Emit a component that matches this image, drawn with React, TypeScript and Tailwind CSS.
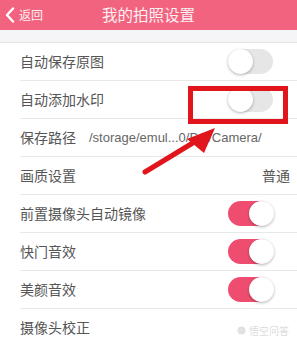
import React from "react";

type Row =
  | { label: string; kind: "toggle"; on: boolean }
  | { label: string; kind: "value"; value: string }
  | { label: string; kind: "path"; value: string }
  | { label: string; kind: "none" };

const rows: Row[] = [
  { label: "自动保存原图", kind: "toggle", on: false },
  { label: "自动添加水印", kind: "toggle", on: false },
  { label: "保存路径", kind: "path", value: "/storage/emul...0/DC/Camera/" },
  { label: "画质设置", kind: "value", value: "普通" },
  { label: "前置摄像头自动镜像", kind: "toggle", on: true },
  { label: "快门音效", kind: "toggle", on: true },
  { label: "美颜音效", kind: "toggle", on: true },
  { label: "摄像头校正", kind: "none" },
];

const Toggle = ({ on }: { on: boolean }) => (
  <div
    className={`relative w-[45px] h-[25px] rounded-full mr-[24px] ${
      on ? "bg-[#ef4d70]" : "bg-[#e6e6e6]"
    }`}
  >
    <div
      className={`absolute top-0 w-[25px] h-[25px] rounded-full bg-white shadow-[0_1px_3px_rgba(0,0,0,0.3)] ${
        on ? "right-[-1px]" : "left-0"
      }`}
    />
  </div>
);

export default function App() {
  return (
    <div
      className="relative w-[297px] h-[341px] overflow-hidden bg-white"
      style={{ fontFamily: '"Noto Sans CJK SC", "Liberation Sans", sans-serif' }}
    >
      {/* Header */}
      <div className="relative h-[30px] bg-[#f1637f] flex items-center">
        <div className="flex items-center pl-[5px] text-white/90">
          <svg width="10" height="16" viewBox="0 0 10 16" fill="none">
            <path d="M8 1.5L2 8l6 6.5" stroke="white" strokeWidth="2.4" strokeLinecap="round" strokeLinejoin="round" />
          </svg>
          <span className="ml-[4px] text-[12px] leading-none">返回</span>
        </div>
        <div className="absolute left-0 right-0 text-center text-[15.5px] leading-none text-white/90">
          我的拍照设置
        </div>
      </div>

      <div className="h-[13px] bg-[#f5f5f7] border-b border-[#e2e2e4]" />

      {/* Rows */}
      <div className="pl-[20px]">
        {rows.map((row, i) => (
          <div
            key={i}
            className="h-[38px] flex items-center justify-between border-b border-[#e8e8e8] text-[14px] text-[#555]"
          >
            <div className="flex items-center">
              <span>{row.label}</span>
              {row.kind === "path" && (
                <span className="ml-[13px] text-[13px] text-[#666]" style={{ fontFamily: '"Liberation Sans", sans-serif' }}>
                  {row.value}
                </span>
              )}
            </div>
            {row.kind === "toggle" && <Toggle on={row.on} />}
            {row.kind === "value" && <span className="mr-[7px] text-[14px] text-[#555]">{row.value}</span>}
          </div>
        ))}
      </div>

      {/* Highlight box */}
      <div className="absolute left-[188px] top-[86px] w-[100px] h-[38px] border-[5px] border-[#e0161c]" />

      {/* Arrow */}
      <svg className="absolute left-0 top-0" width="297" height="341" viewBox="0 0 297 341">
        <line x1="145" y1="172" x2="196" y2="141" stroke="#e0161c" strokeWidth="5" strokeLinecap="round" />
        <polygon points="215,128 187,139 204,153" fill="#e0161c" />
      </svg>

      {/* Watermark */}
      <div className="absolute right-[8px] bottom-[3px] flex items-center gap-[3px] text-[10px] text-[#dcdcdc]">
        <svg width="9" height="9" viewBox="0 0 10 10">
          <circle cx="5" cy="5" r="4.5" fill="#e2e2e2" />
        </svg>
        <span>悟空问答</span>
      </div>
    </div>
  );
}
